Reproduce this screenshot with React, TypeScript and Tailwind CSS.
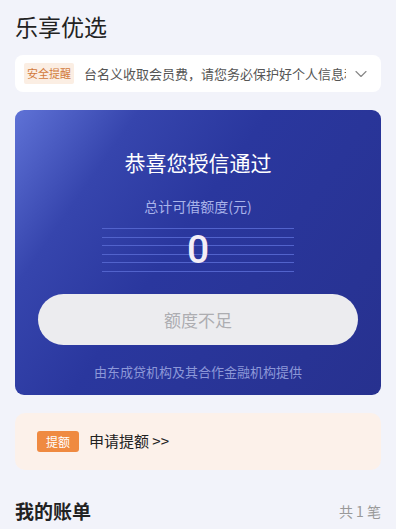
import React from 'react';
import { ChevronDown } from 'lucide-react';

const cjk = "font-['Noto_Sans_CJK_SC','Noto_Sans',sans-serif]";

const App = () => {
    return (
        <div className={`w-[396px] h-[529px] overflow-hidden bg-[#f2f3fa] ${cjk}`}>
            <div className="px-[15px]">
                {/* Title */}
                <h1 className="pt-[10px] h-[45px] text-[23px] leading-[32px] text-[#222] font-normal">乐享优选</h1>

                {/* Notice bar */}
                <div className="mt-[10px] h-[37px] bg-white rounded-[8px] flex items-center pl-[9px] pr-[10px]">
                    <span className="shrink-0 h-[21px] px-[3px] rounded-[2px] bg-[#fbeee3] text-[#d27a3c] text-[11px] leading-[21px]">安全提醒</span>
                    <div className="ml-[10px] w-[262px] overflow-hidden whitespace-nowrap text-[13px] text-[#555]">
                        台名义收取会员费，请您务必保护好个人信息和财产安全
                    </div>
                    <ChevronDown className="ml-auto size-[20px] text-[#888]" strokeWidth={1.4} />
                </div>

                {/* Credit card */}
                <div className="mt-[18px] h-[285px] rounded-[9px] bg-[linear-gradient(125deg,#5f72d6_0%,#3645ad_22%,#2a379e_45%,#27318f_100%)] flex flex-col items-center">
                    <div className="mt-[38px] text-[21px] leading-[28px] text-white">恭喜您授信通过</div>
                    <div className="mt-[20px] text-[14px] leading-[20px] text-[#a9b3ea]">总计可借额度(元)</div>
                    <div className="relative mt-[11px] w-[192px] h-[46px] flex flex-col justify-between py-[1px]">
                        <div className="h-px bg-[#5263cc]" />
                        <div className="h-px bg-[#5263cc]" />
                        <div className="h-px bg-[#5263cc]" />
                        <div className="h-px bg-[#5263cc]" />
                        <div className="h-px bg-[#5263cc]" />
                        <div className="h-px bg-[#5263cc]" />
                        <span className="absolute inset-0 flex items-center justify-center text-[39px] leading-none font-medium text-[#f4eef6] font-['Roboto',sans-serif]">0</span>
                    </div>
                    <button className="mt-[21px] w-[320px] h-[51px] rounded-full bg-[#ececef] text-[17px] text-[#adadb1]">额度不足</button>
                    <div className="mt-[18px] text-[13px] leading-[18px] text-[#8d98d8]">由东成贷机构及其合作金融机构提供</div>
                </div>

                {/* Promo */}
                <div className="mt-[18px] h-[57px] rounded-[10px] bg-[#fcf1ea] flex items-center pl-[22px]">
                    <span className="h-[21px] w-[42px] rounded-[3px] bg-[#ef8a41] text-white text-[12px] leading-[21px] text-center">提额</span>
                    <span className="ml-[10px] text-[15px] text-[#222]">申请提额 &gt;&gt;</span>
                </div>

                {/* Bills */}
                <div className="mt-[27px] flex items-center justify-between">
                    <span className="text-[19px] font-bold text-[#222]">我的账单</span>
                    <span className="text-[14px] text-[#999]">共 1 笔</span>
                </div>
            </div>
        </div>
    );
};

export default App;
